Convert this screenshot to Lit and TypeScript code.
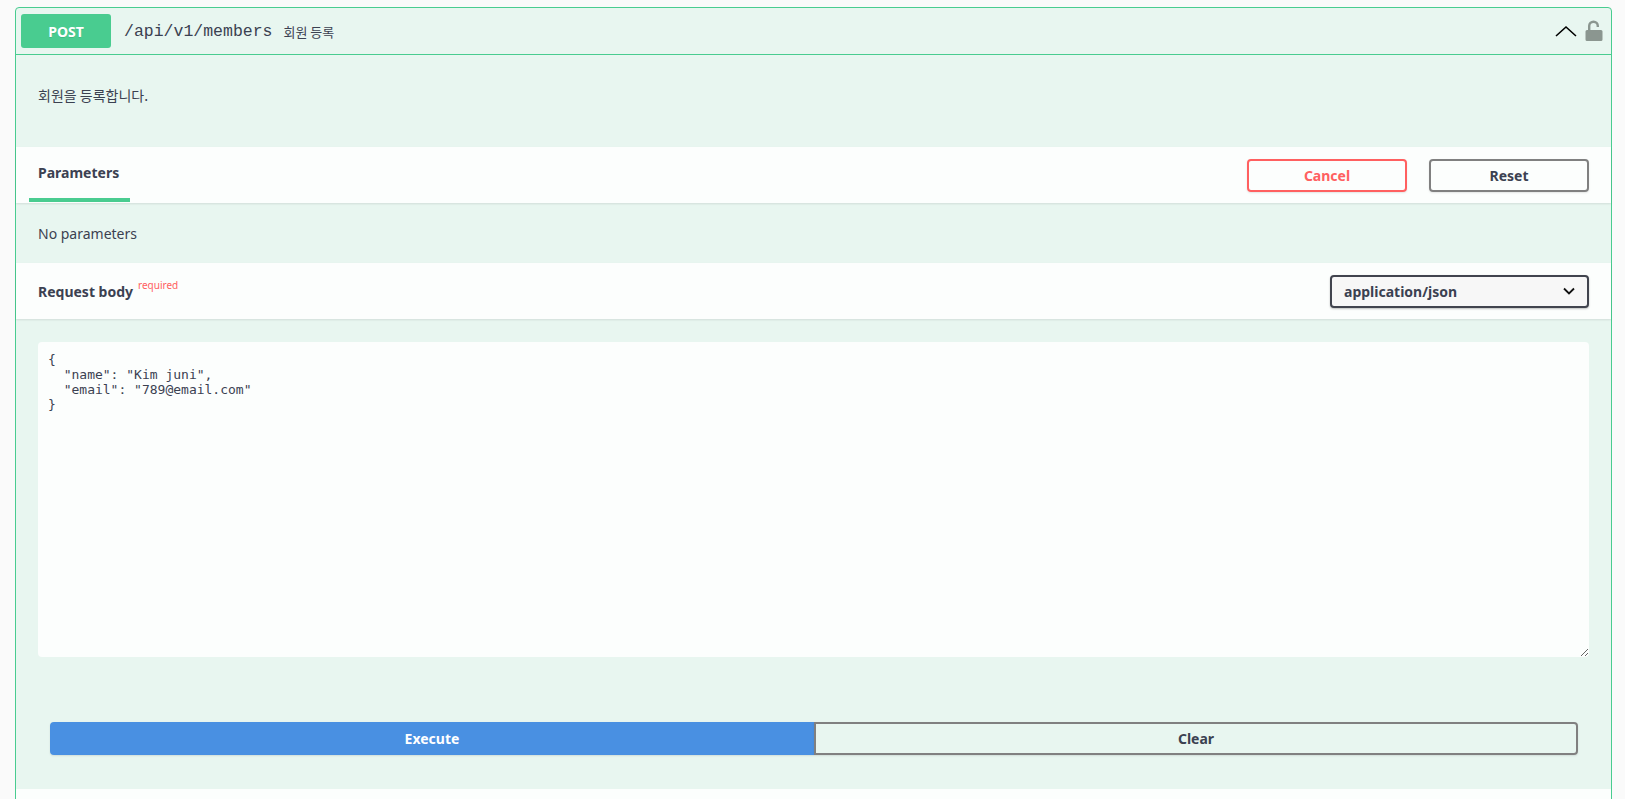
import { LitElement, html, css } from "lit";
import { customElement } from "lit/decorators.js";

const BODY = `{
  "name": "Kim juni",
  "email": "789@email.com"
}`;

@customElement("app-root")
export class AppRoot extends LitElement {
  static styles = css`
    :host {
      display: block;
      height: 799px;
      overflow: hidden;
      background: #fafafa;
      box-sizing: border-box;
      padding: 7px 13px 0 15px;
      font-family: "Noto Sans", "Noto Sans CJK KR", sans-serif;
      color: #3b4151;
    }
    * { box-sizing: border-box; }
    .op {
      border: 1px solid #49cc90;
      border-radius: 4px;
      background: #e8f6f0;
      height: 830px;
    }
    .summary {
      display: flex;
      align-items: center;
      height: 47px;
      padding: 0 5px;
      border-bottom: 1px solid #49cc90;
    }
    .method {
      width: 90px;
      height: 34px;
      background: #49cc90;
      border-radius: 3px;
      color: #fff;
      font-size: 14px;
      font-weight: 700;
      display: flex;
      align-items: center;
      justify-content: center;
      text-shadow: 0 1px 0 rgba(0, 0, 0, 0.1);
    }
    .path {
      margin-left: 13px;
      font-family: "Liberation Mono", "DejaVu Sans Mono", monospace;
      font-size: 16.5px;
      color: #3b4151;
    }
    .desc {
      margin-left: 11px;
      font-family: "Noto Sans CJK KR", sans-serif;
      font-size: 13px;
    }
    .spacer { flex: 1; }
    .chev { display: block; margin-right: 8px; }
    .lock { display: block; margin-right: 3px; }
    .intro {
      height: 92px;
      padding: 25px 22px 0;
      font-family: "Noto Sans CJK KR", sans-serif;
      font-size: 14px;
      line-height: 30px;
    }
    .bar {
      display: flex;
      align-items: center;
      height: 56px;
      background: rgba(255, 255, 255, 0.85);
      box-shadow: 0 1px 2px rgba(0, 0, 0, 0.1);
      padding: 0 22px;
    }
    .tab {
      align-self: stretch;
      margin-left: -9px;
      padding: 0 9px;
      width: 101px;
      display: flex;
      align-items: center;
      font-size: 14px;
      font-weight: 700;
      border-bottom: 4px solid #49cc90;
      height: 55px;
    }
    .btn {
      width: 160px;
      height: 33px;
      background: transparent;
      border: 2px solid #808080;
      border-radius: 4px;
      font: 700 14px "Noto Sans", sans-serif;
      color: #3b4151;
      box-shadow: 0 1px 2px rgba(0, 0, 0, 0.1);
      padding: 0;
    }
    .cancel { border-color: #ff6060; color: #ff6060; margin-right: 22px; }
    .noparam {
      height: 60px;
      padding: 0 22px;
      display: flex;
      align-items: center;
      font-size: 14px;
    }
    .rb {
      font-size: 14px;
      font-weight: 700;
    }
    .req {
      font-size: 10px;
      color: #ff6060;
      margin-left: 5px;
      align-self: flex-start;
      margin-top: 15px;
    }
    .select {
      width: 259px;
      height: 33px;
      border: 2px solid #41444e;
      border-radius: 4px;
      background: #f7f7f7;
      box-shadow: 0 1px 2px rgba(0, 0, 0, 0.25);
      display: flex;
      align-items: center;
      justify-content: space-between;
      padding: 0 12px;
      font-size: 14px;
      font-weight: 700;
    }
    .editor { padding: 23px 22px 0; }
    textarea {
      display: block;
      width: 100%;
      height: 315px;
      border: none;
      outline: none;
      border-radius: 4px;
      background: rgba(255, 255, 255, 0.85);
      padding: 10px;
      font-family: "DejaVu Sans Mono", monospace;
      font-size: 13px;
      line-height: 15px;
      font-weight: 400;
      color: #3b4151;
      resize: vertical;
    }
    .actions {
      display: flex;
      margin: 65px 33px 0 34px;
    }
    .actions .btn { flex: 1; width: auto; }
    .execute {
      background: #4990e2;
      border-color: #4990e2;
      color: #fff;
      border-radius: 4px 0 0 4px;
    }
    .clear { border-radius: 0 4px 4px 0; }
    .foot {
      margin-top: 34px;
      height: 20px;
      background: rgba(255, 255, 255, 0.85);
    }
  `;

  render() {
    return html`
      <div class="op">
        <div class="summary">
          <span class="method">POST</span>
          <span class="path">/api/v1/members</span>
          <span class="desc">회원 등록</span>
          <span class="spacer"></span>
          <svg class="chev" width="22" height="12" viewBox="0 0 22 12" fill="none" stroke="#000" stroke-width="1.6">
            <path d="M1 11 L11 2 L21 11" />
          </svg>
          <svg class="lock" width="18" height="22" viewBox="0 0 18 22">
            <path fill="#8b9690" d="M2 10h1V6a5.5 5.5 0 0 1 11 0v1h-2.4V6a3.1 3.1 0 0 0-6.2 0v4H16a1.5 1.5 0 0 1 1.5 1.5v8A1.5 1.5 0 0 1 16 21H2a1.5 1.5 0 0 1-1.5-1.5v-8A1.5 1.5 0 0 1 2 10z" />
          </svg>
        </div>
        <div class="intro">회원을 등록합니다.</div>
        <div class="bar">
          <div class="tab">Parameters</div>
          <span class="spacer"></span>
          <button class="btn cancel">Cancel</button>
          <button class="btn">Reset</button>
        </div>
        <div class="noparam">No parameters</div>
        <div class="bar">
          <span class="rb">Request body</span>
          <span class="req">required</span>
          <span class="spacer"></span>
          <div class="select">
            <span>application/json</span>
            <svg width="12" height="8" viewBox="0 0 12 8" fill="none" stroke="#111" stroke-width="1.8">
              <path d="M1 1.5 L6 6.5 L11 1.5" />
            </svg>
          </div>
        </div>
        <div class="editor">
          <textarea spellcheck="false" .value=${BODY}></textarea>
        </div>
        <div class="actions">
          <button class="btn execute">Execute</button>
          <button class="btn clear">Clear</button>
        </div>
        <div class="foot"></div>
      </div>
    `;
  }
}
